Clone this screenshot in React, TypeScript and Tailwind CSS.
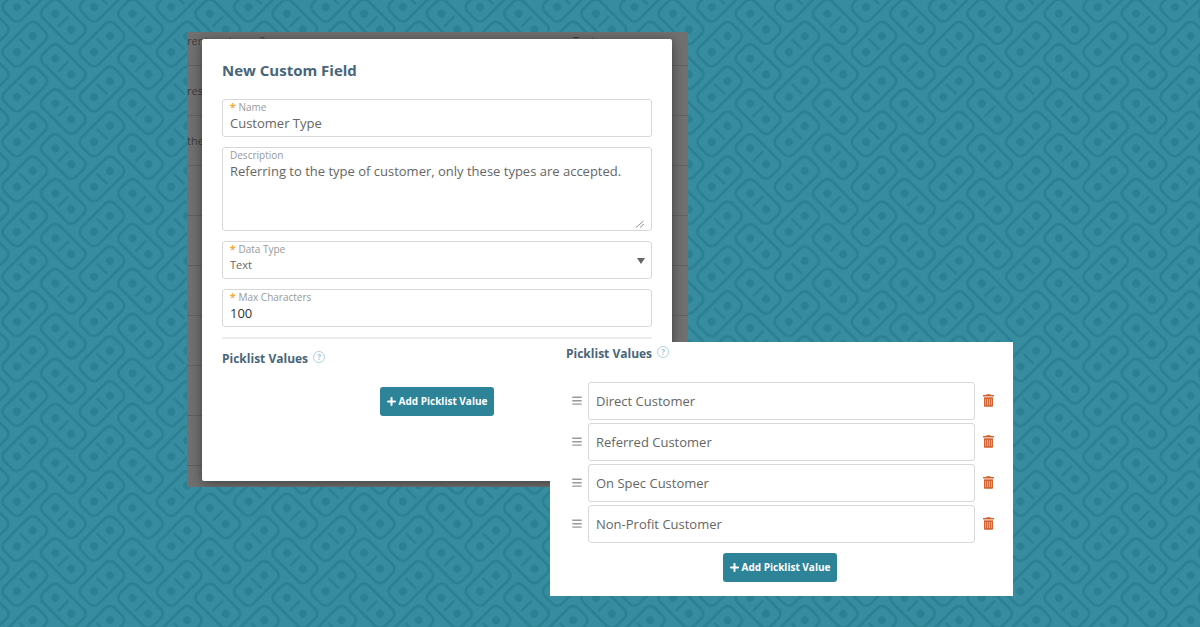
import type { ReactNode } from "react";

const HIDDEN_ROWS = [
  { id: 1, name: "rent customer?", type: "Text" },
  { id: 2, name: "res", type: "" },
  { id: 3, name: "the", type: "" },
  { id: 4, name: "", type: "" },
  { id: 5, name: "", type: "" },
  { id: 6, name: "", type: "" },
  { id: 7, name: "", type: "" },
  { id: 8, name: "", type: "" },
  { id: 9, name: "", type: "" },
];

const PICKLIST = ["Direct Customer", "Referred Customer", "On Spec Customer", "Non-Profit Customer"];

function Tile({ x, y, angle }: { x: number; y: number; angle: number }) {
  return (
    <g transform={`translate(${x} ${y}) rotate(${angle})`}>
      <rect x="-23.3" y="-12" width="46.6" height="24" rx="6.5" fill="none" strokeWidth="2.7" />
      <circle cx="-11.2" cy="0" r="4" stroke="none" fill="#2b8092" />
      <circle cx="11.2" cy="0" r="4" stroke="none" fill="#2b8092" />
      <path d="M0-6.4V6.4" strokeWidth="2.5" strokeLinecap="round" />
    </g>
  );
}

function Backdrop() {
  const w = 77.2;
  const h = 44.94;
  const spots = [-1, 0, 1, 2].flatMap((i) => [-1, 0, 1, 2].map((j) => ({ x: i * w, y: j * h })));
  return (
    <svg className="absolute inset-0 size-full" aria-hidden="true">
      <defs>
        <pattern id="tiles" width={w} height={h} patternUnits="userSpaceOnUse">
          <g stroke="#2b8092">
            {spots.map(({ x, y }) => (
              <g key={`${x},${y}`}>
                <Tile x={x + 24.8} y={y - 0.8} angle={-45} />
                <Tile x={x + 63.3} y={y + 21.6} angle={45} />
              </g>
            ))}
          </g>
        </pattern>
      </defs>
      <rect width="100%" height="100%" fill="url(#tiles)" />
    </svg>
  );
}

function Field({ id, label, required, children }: { id: string; label: string; required?: boolean; children: ReactNode }) {
  return (
    <div className="relative flex flex-col rounded-[3px] border border-[#d8d8d8] bg-white px-[7px] pt-px pb-0.5">
      <label htmlFor={id} className="text-[10px] leading-3 text-[#999]">
        {required && <span className="mr-[3px] font-bold text-[#f9a72b]">*</span>}
        {label}
      </label>
      {children}
    </div>
  );
}

function PicklistHeading() {
  return (
    <div className="flex items-start gap-[5px]">
      <h2 className="pt-px text-[12px] leading-5 font-bold text-[#48657a]">Picklist Values</h2>
      <button
        type="button"
        aria-label="Help"
        className="mt-[3px] flex size-3 items-center justify-center rounded-full border border-[#b5d0e0] text-[8px] leading-none font-bold text-[#a5c5da]"
      >
        ?
      </button>
    </div>
  );
}

function AddButton() {
  return (
    <button type="button" className="flex h-[29px] items-center gap-[3px] rounded-[3px] bg-[#2d8398] px-[7px] text-[10px] font-bold text-white">
      <svg viewBox="0 0 9 9" className="size-[9px]" aria-hidden="true">
        <path d="M4.500 .9v7.200M.9 4.500h7.200" stroke="currentColor" strokeWidth="2" strokeLinecap="round" />
      </svg>
      Add Picklist Value
    </button>
  );
}

function Grip() {
  return (
    <svg viewBox="0 0 10 10" className="size-[10px]" aria-hidden="true">
      <path d="M.3 1.300h9.400M.3 4.700h9.400M.3 8.100h9.400" stroke="#999" strokeWidth="1.400" />
    </svg>
  );
}

function Trash() {
  return (
    <svg viewBox="0 0 11 13" className="h-[13px] w-[11px]" aria-hidden="true">
      <path d="M3.5 0h4v1h-4z" fill="#dd7a4c" />
      <path d="M0 1h11v1.4H0z" fill="#d4622f" />
      <path d="M1 2.4h9v1.2H1z" fill="#e8a98b" />
      <path d="M1 3.6h9v8.4a.8.8 0 0 1-.8.8H1.800a.8.8 0 0 1-.8-.8z" fill="#d4622f" />
      <path d="M2.600 5v6.200M4.600 5v6.200M6.400 5v6.200M8.400 5v6.200" stroke="#efbfa8" strokeWidth=".8" />
    </svg>
  );
}

function CustomFieldDialog() {
  return (
    <section className="relative w-[501px] shrink-0 overflow-hidden bg-[#707070] pt-[7px] pr-4 pb-1.5 pl-[15px]">
      <div className="absolute inset-x-0 -top-4 text-[11px] text-[#3c3c3c]" aria-hidden="true">
        {HIDDEN_ROWS.map((row) => (
          <div key={row.id} className="grid h-[50px] grid-cols-[386px_1fr] items-center border-b border-[#626262] pt-0.5">
            <span>{row.name}</span>
            <span>{row.type}</span>
          </div>
        ))}
      </div>
      <form className="relative flex flex-col rounded-xs bg-white px-5 pt-[19px] pb-[65px] shadow-[0_2px_12px_rgba(0,0,0,0.45)]">
        <h1 className="mb-[17px] text-[15px] leading-6 font-bold text-[#48657a]">New Custom Field</h1>
        <div className="flex flex-col gap-[10px]">
          <Field id="name" label="Name" required>
            <input id="name" defaultValue="Customer Type" className="h-[21px] pb-0.5 text-[13px] text-[#666] outline-none" />
          </Field>
          <Field id="description" label="Description">
            <textarea
              id="description"
              defaultValue="Referring to the type of customer, only these types are accepted."
              className="h-[67px] resize-none text-[13px] leading-5 text-[#666] outline-none"
            />
            <svg viewBox="0 0 8 8" className="absolute right-[7px] bottom-0.5 size-2" aria-hidden="true">
              <path d="M0 7.500L7.500 1M4 7.500L8 4" stroke="#888" strokeWidth=".9" />
            </svg>
          </Field>
          <Field id="type" label="Data Type" required>
            <select id="type" className="h-[21px] appearance-none text-[11px] text-[#666] outline-none">
              <option>Text</option>
            </select>
            <svg viewBox="0 0 8 6" className="pointer-events-none absolute top-4 right-1.5 h-1.5 w-2" aria-hidden="true">
              <path d="M0 0h8L4 6z" fill="#666" />
            </svg>
          </Field>
          <Field id="max" label="Max Characters" required>
            <input id="max" defaultValue="100" className="h-[21px] pb-0.5 text-[13px] text-[#333] outline-none" />
          </Field>
        </div>
        <hr className="mt-[10px] mb-[9px] border-t-2 border-[#ececec]" />
        <PicklistHeading />
        <div className="mt-[18px] flex justify-center">
          <AddButton />
        </div>
      </form>
    </section>
  );
}

function PicklistPanel() {
  return (
    <section className="relative mt-[310px] -ml-[138px] flex w-[463px] shrink-0 flex-col bg-white px-4 pt-px pb-[14px]">
      <PicklistHeading />
      <ul className="mt-[18px] flex flex-col gap-[3px] pl-1.5">
        {PICKLIST.map((value) => (
          <li key={value} className="flex items-center">
            <Grip />
            <input
              aria-label="Picklist value"
              defaultValue={value}
              className="mr-2 ml-1.5 h-[38px] min-w-0 flex-1 rounded-[3px] border border-[#d8d8d8] px-[7px] text-[13px] text-[#666] outline-none"
            />
            <button type="button" aria-label={`Delete ${value}`} className="mr-[3px] pb-0.5">
              <Trash />
            </button>
          </li>
        ))}
      </ul>
      <div className="mt-[10px] mr-[3px] flex justify-center">
        <AddButton />
      </div>
    </section>
  );
}

export default function App() {
  return (
    <main className="relative min-h-screen bg-[#388c9f] pt-8 pb-[31px] font-['Open_Sans',sans-serif]">
      <Backdrop />
      <div className="relative flex items-start justify-center">
        <CustomFieldDialog />
        <PicklistPanel />
      </div>
    </main>
  );
}
